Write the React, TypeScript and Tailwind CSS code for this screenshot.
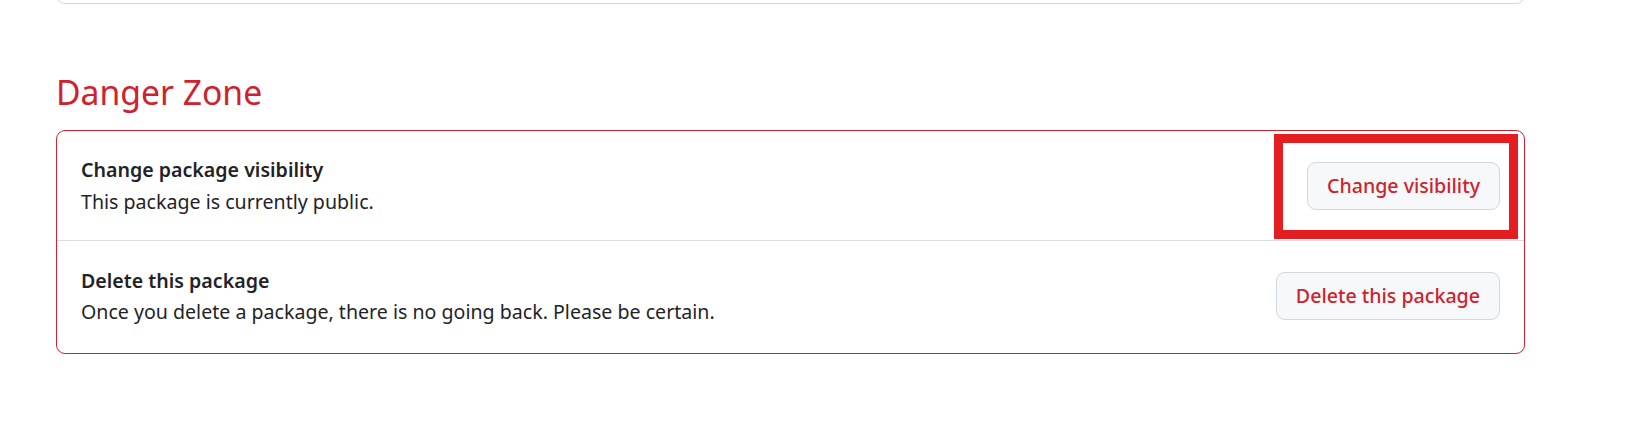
export default function App() {
  const rows = [
    {
      title: "Change package visibility",
      desc: "This package is currently public.",
      action: "Change visibility",
      highlight: true,
      pad: "pt-[23px] pb-[22.5px]",
    },
    {
      title: "Delete this package",
      desc: "Once you delete a package, there is no going back. Please be certain.",
      action: "Delete this package",
      highlight: false,
      pad: "pt-[24px] pb-[25px] border-t border-[#d8dee4]",
    },
  ];

  return (
    <div className="min-h-[439px] bg-white font-['Noto_Sans',sans-serif] text-[#1f2328]">
      <div className="ml-[56px] w-[1469px]">
        {/* tail of the section above */}
        <div className="-mt-[40px] h-[44px] rounded-b-[9px] border border-[#d0d7de]" />

        <h2 className="mt-[61px] pb-[11px] text-[33.7px] font-normal leading-[54px] text-[#cf222e]">
          Danger Zone
        </h2>

        <div className="rounded-[9px] border border-[#cf222e]">
          {rows.map((row) => (
            <div
              key={row.title}
              className={"flex items-center justify-between px-[24px] " + row.pad}
            >
              <div className="text-[19.6px] leading-[31.5px]">
                <div className="font-semibold">{row.title}</div>
                <div>{row.desc}</div>
              </div>
              <div className="relative">
                <button className="h-[48px] rounded-[9px] border border-[#d0d7de] bg-[#f6f8fa] px-[19px] text-[19.6px] font-medium text-[#cf222e]">
                  {row.action}
                </button>
                {row.highlight && (
                  <div className="pointer-events-none absolute -left-[33px] -right-[18px] -top-[28px] -bottom-[29px] border-[9px] border-[#e41e20]" />
                )}
              </div>
            </div>
          ))}
        </div>
      </div>
    </div>
  );
}
